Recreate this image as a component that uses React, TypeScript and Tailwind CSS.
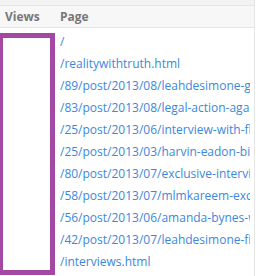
const pages = [
  "/",
  "/realitywithtruth.html",
  "/89/post/2013/08/leahdesimone-gets-real",
  "/83/post/2013/08/legal-action-against",
  "/25/post/2013/06/interview-with-flo",
  "/25/post/2013/03/harvin-eadon-bio",
  "/80/post/2013/07/exclusive-interview",
  "/58/post/2013/07/mlmkareem-exclusive",
  "/56/post/2013/06/amanda-bynes-was",
  "/42/post/2013/07/leahdesimone-finally",
  "/interviews.html",
];

export default function App() {
  return (
    <div className="relative w-[260px] h-[276px] overflow-hidden bg-white font-['Open_Sans',sans-serif]">
      <div className="w-[255px] h-full border-r border-[#e6e6e6]">
        <div className="h-[6px] bg-[#f2f2f2] border-b border-[#e6e6e6]" />
        <div className="flex h-[22px] items-center bg-[#f7f7f7] border-b border-[#e6e6e6] text-[12px] font-bold text-[#777]">
          <div className="w-[60px] pl-[5px]">Views</div>
          <div>Page</div>
        </div>
        <div className="pt-[3px]">
          {pages.map((p, i) => (
            <div key={i} className="flex h-[22px] items-center text-[12px] text-[#3a88dc]">
              <div className="w-[60px] shrink-0" />
              <div className="w-[190px] whitespace-nowrap overflow-hidden">{p}</div>
            </div>
          ))}
        </div>
      </div>
      <div className="absolute left-[-2px] top-[33px] w-[57px] h-[242px] border-[5px] border-[#a349a4]" />
    </div>
  );
}
